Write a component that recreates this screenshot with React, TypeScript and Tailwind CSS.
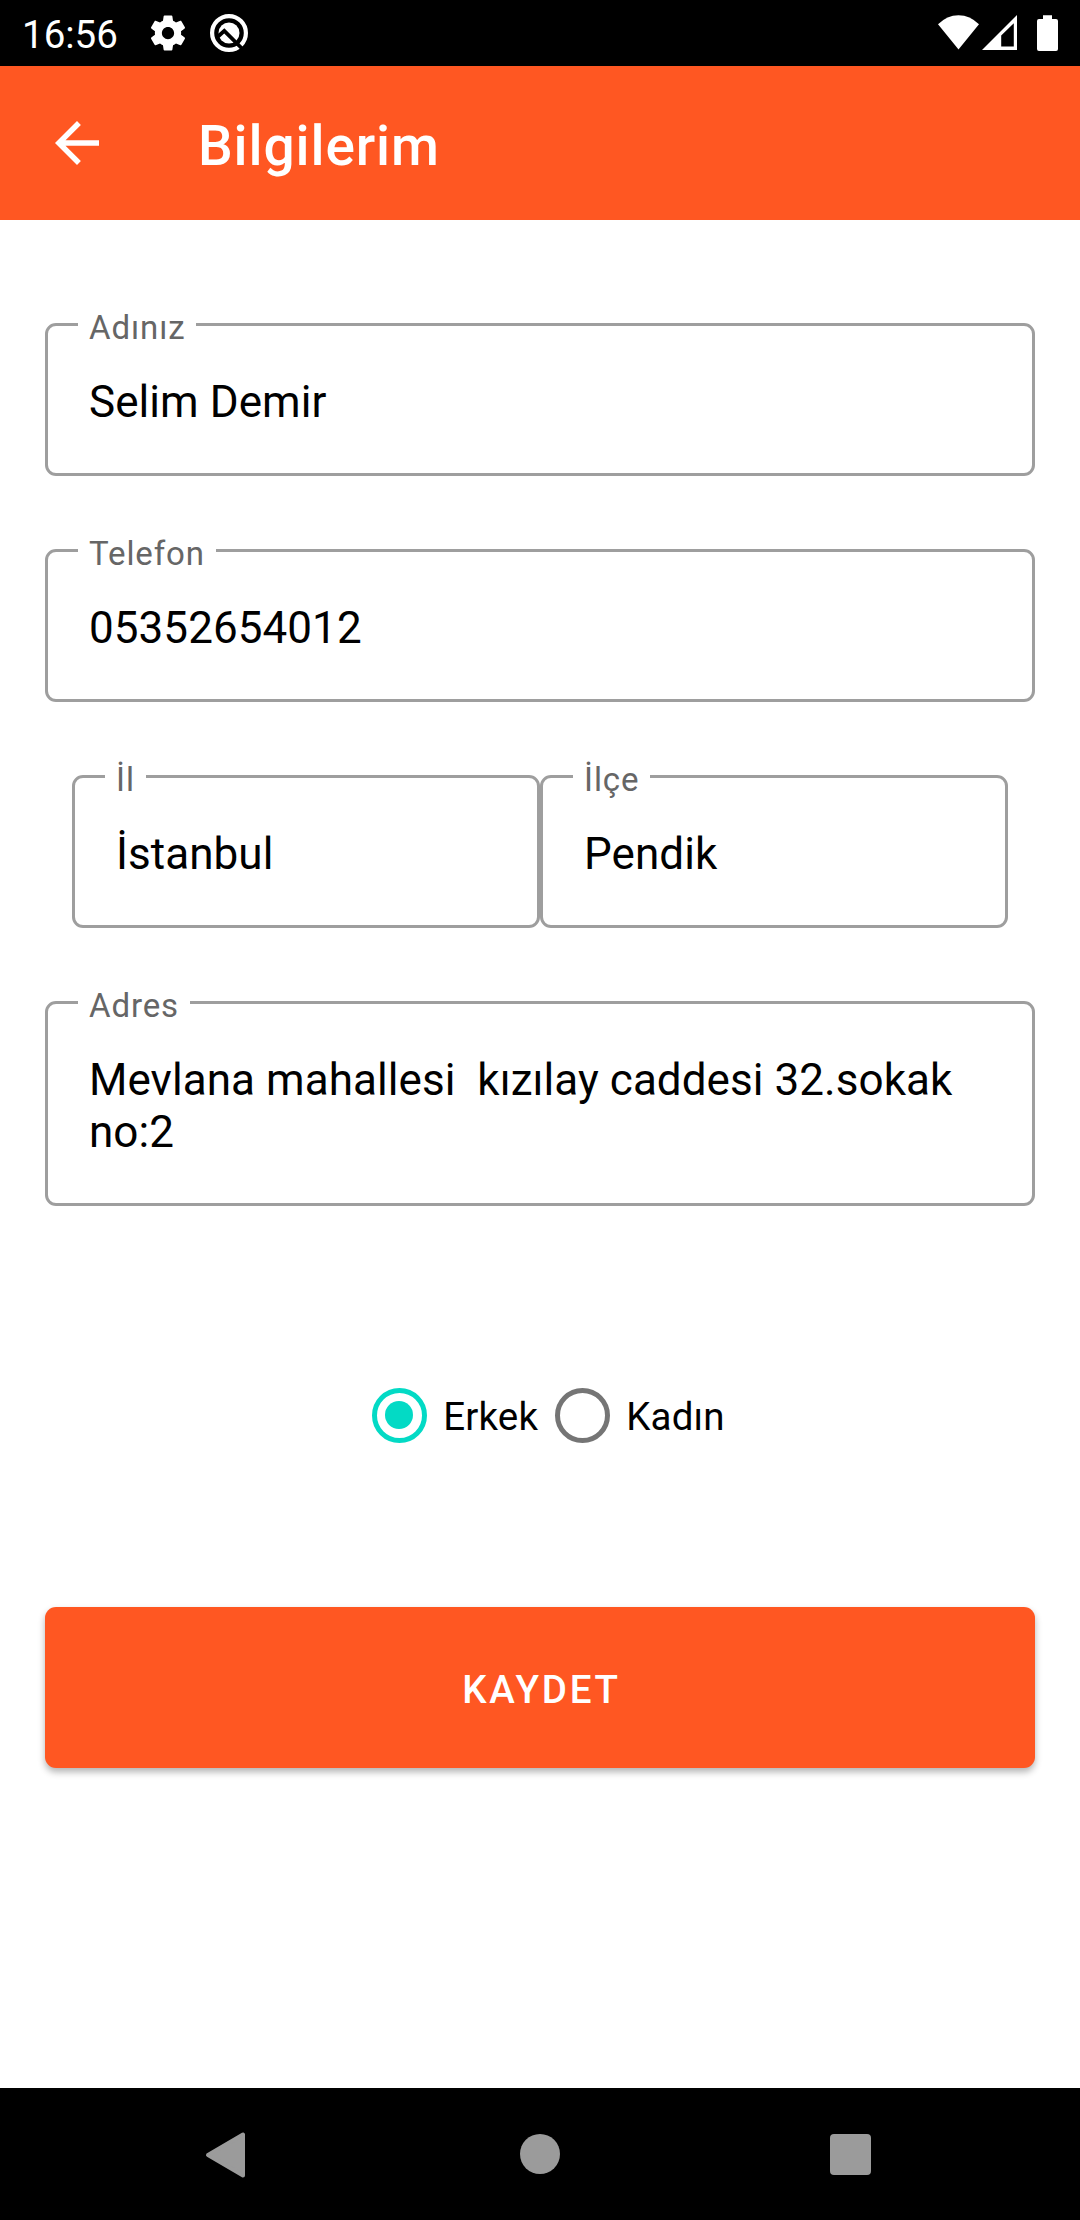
import React from "react";

function StatusBar() {
  return (
    <div className="flex h-[66px] items-start bg-black text-white">
      <span className="ml-[22px] mt-[14px] w-[98px] text-[38.5px] leading-[42px]">16:56</span>
      <svg className="ml-[27px] mt-[12px]" width="42" height="42" viewBox="0 0 24 24" fill="#fff">
        <path d="M19.43 12.98c.04-.32.07-.64.07-.98s-.03-.66-.07-.98l2.11-1.65c.19-.15.24-.42.12-.64l-2-3.46c-.12-.22-.39-.3-.61-.22l-2.49 1c-.52-.4-1.08-.73-1.69-.98l-.38-2.65C14.46 2.18 14.25 2 14 2h-4c-.25 0-.46.18-.49.42l-.38 2.65c-.61.25-1.17.59-1.69.98l-2.49-1c-.23-.09-.49 0-.61.22l-2 3.46c-.13.22-.07.49.12.64l2.11 1.65c-.04.32-.07.65-.07.98s.03.66.07.98l-2.11 1.65c-.19.15-.24.42-.12.64l2 3.46c.12.22.39.3.61.22l2.49-1c.52.4 1.08.73 1.69.98l.38 2.65c.03.24.24.42.49.42h4c.25 0 .46-.18.49-.42l.38-2.65c.61-.25 1.17-.59 1.69-.98l2.49 1c.23.09.49 0 .61-.22l2-3.46c.12-.22.07-.49-.12-.64l-2.11-1.65zM12 15.5c-1.93 0-3.5-1.57-3.5-3.5s1.57-3.5 3.5-3.5 3.5 1.57 3.5 3.5-1.57 3.5-3.5 3.5z" />
      </svg>
      <svg className="ml-[20px] mt-[13px]" width="40" height="40" viewBox="0 0 40 40" fill="none">
        <circle cx="20" cy="20" r="16.9" stroke="#fff" strokeWidth="4.2" />
        <circle cx="20" cy="20" r="10.5" fill="#fff" />
        <path d="M8.5 24L15.3 17.8L33.5 36" stroke="#000" strokeWidth="3.8" />
      </svg>
      <svg className="ml-auto mr-[20px] mt-[13px]" width="124" height="40" viewBox="0 0 124 40" fill="#fff">
        <path d="M2 11.3Q11 2.2 22.5 2.2T43 11.3L22.5 36.5Z" />
        <path fillRule="evenodd" d="M46 37L81 2V37ZM65.2 22.5V33.5H77.8V10.2Z" />
        <path d="M107 2.2h9v3.8h4a2 2 0 0 1 2 2v28a2 2 0 0 1-2 2h-17a2 2 0 0 1-2-2v-28a2 2 0 0 1 2-2h4z" />
      </svg>
    </div>
  );
}

function AppBar() {
  return (
    <header className="flex h-[154px] items-center bg-[#ff5722] text-white">
      <svg className="ml-[44px]" width="66" height="66" viewBox="0 0 24 24" fill="#fff">
        <path d="M20 11H7.83l5.59-5.59L12 4l-8 8 8 8 1.41-1.41L7.83 13H20v-2z" />
      </svg>
      <h1 className="ml-[88px] mt-[5px] text-[55px] font-medium leading-[64px] tracking-[0.9px]">Bilgilerim</h1>
    </header>
  );
}

function Field({ label, value }: { label: string; value: string }) {
  return (
    <div className="relative min-w-0 flex-1 rounded-[11px] border-[3px] border-[#9e9e9e] pb-[45px] pl-[41px] pr-[41px] pt-[50px]">
      <span className="absolute -top-[18px] left-[30px] bg-white px-[11px] text-[33px] leading-[39px] tracking-[0.9px] text-[#666]">
        {label}
      </span>
      <p className="whitespace-pre-wrap text-[44px] leading-[52px] tracking-[0.06px] text-black">{value}</p>
    </div>
  );
}

function Radio({ label, checked = false }: { label: string; checked?: boolean }) {
  return (
    <div className="flex items-center">
      <span
        className={
          checked
            ? "mx-[16.5px] flex size-[55px] items-center justify-center rounded-full border-[5.5px] border-[#03dac5]"
            : "mx-[16.5px] flex size-[55px] items-center justify-center rounded-full border-[5.5px] border-[#757575]"
        }
      >
        {checked && <span className="size-[28px] rounded-full bg-[#03dac5]" />}
      </span>
      <span className="mt-[3px] text-[38.5px] leading-[46px] tracking-[0.2px] text-black">{label}</span>
    </div>
  );
}

function NavBar() {
  return (
    <nav className="flex h-[132px] items-start bg-black">
      <svg className="ml-[205px] mt-[43px]" width="42" height="48" viewBox="0 0 42 48">
        <path d="M3 24L38 3.5V44.5Z" fill="#9b9b9b" stroke="#9b9b9b" strokeWidth="4" strokeLinejoin="round" />
      </svg>
      <span className="ml-[273px] mt-[46px] size-[40px] rounded-full bg-[#9b9b9b]" />
      <span className="ml-[270px] mt-[46px] size-[41px] rounded-[4px] bg-[#9b9b9b]" />
    </nav>
  );
}

export default function App() {
  return (
    <div className="flex h-[2220px] w-[1080px] flex-col overflow-hidden bg-white font-[Roboto,sans-serif]">
      <StatusBar />
      <AppBar />
      <main className="flex flex-1 flex-col px-[45px] pt-[103px]">
        <div className="flex flex-col gap-[73px]">
          <div className="flex"><Field label="Adınız" value="Selim Demir" /></div>
          <div className="flex"><Field label="Telefon" value="05352654012" /></div>
          <div className="flex px-[27px]">
            <Field label="İl" value="İstanbul" />
            <Field label="İlçe" value="Pendik" />
          </div>
          <div className="flex"><Field label="Adres" value={"Mevlana mahallesi  kızılay caddesi 32.sokak no:2"} /></div>
        </div>
        <div className="mt-[181px] flex h-[56px] items-center justify-center">
          <Radio label="Erkek" checked />
          <Radio label="Kadın" />
        </div>
        <button className="mt-[164px] h-[161px] rounded-[11px] bg-[#ff5722] pl-[3px] pt-[4px] text-[38.5px] font-medium leading-[46px] tracking-[2.8px] text-white shadow-[0_4px_7px_rgba(0,0,0,0.3)]">
          KAYDET
        </button>
      </main>
      <NavBar />
    </div>
  );
}
